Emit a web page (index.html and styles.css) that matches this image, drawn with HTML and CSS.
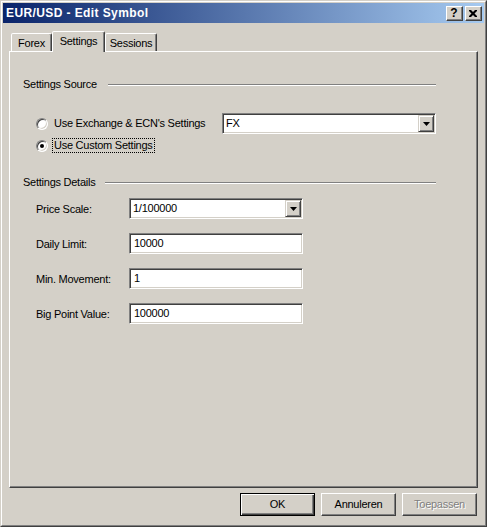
FILE: index.html
```html
<!DOCTYPE html>
<html>
<head>
<meta charset="utf-8">
<title>EUR/USD - Edit Symbol</title>
<link rel="stylesheet" href="styles.css">
</head>
<body>
<div class="window">
  <div class="frame">
    <div class="titlebar">
      <span class="title">EUR/USD - Edit Symbol</span>
      <div class="caption-buttons">
        <span class="cbtn help">?</span>
        <span class="cbtn close">
          <svg width="8" height="7" viewBox="0 0 8 7"><path d="M0 0h2l2 2 2-2h2v1L5.5 3.5 8 6v1H6L4 5 2 7H0V6l2.5-2.5L0 1z" fill="#000"/></svg>
        </span>
      </div>
    </div>
    <div class="client">
      <div class="tabs">
        <div class="tab tab-forex">Forex</div>
        <div class="tab tab-settings active">Settings</div>
        <div class="tab tab-sessions">Sessions</div>
      </div>
      <div class="panel">
        <div class="group-title"><span class="gt-text gt-source">Settings Source</span><span class="etch"></span></div>
        <div class="options">
          <div class="radio-row row-exchange">
            <span class="radio"></span>
            <span class="radio-label label-exchange">Use Exchange &amp; ECN's Settings</span>
            <div class="combo combo-source">
              <span class="combo-value">FX</span>
              <span class="drop"><svg width="7" height="4" viewBox="0 0 7 4"><polygon points="0,0 7,0 3.5,4" fill="#000"/></svg></span>
            </div>
          </div>
          <div class="radio-row row-custom">
            <span class="radio checked"></span>
            <span class="radio-label focus">Use Custom Settings</span>
          </div>
        </div>
        <div class="group-title second"><span class="gt-text gt-details">Settings Details</span><span class="etch"></span></div>
        <div class="fields">
          <div class="field-row">
            <span class="field-label">Price Scale:</span>
            <div class="combo combo-field">
              <span class="combo-value">1/100000</span>
              <span class="drop"><svg width="7" height="4" viewBox="0 0 7 4"><polygon points="0,0 7,0 3.5,4" fill="#000"/></svg></span>
            </div>
          </div>
          <div class="field-row">
            <span class="field-label">Daily Limit:</span>
            <div class="input">10000</div>
          </div>
          <div class="field-row">
            <span class="field-label">Min. Movement:</span>
            <div class="input">1</div>
          </div>
          <div class="field-row">
            <span class="field-label">Big Point Value:</span>
            <div class="input">100000</div>
          </div>
        </div>
      </div>
      <div class="buttons">
        <div class="btn default">OK</div>
        <div class="btn">Annuleren</div>
        <div class="btn disabled">Toepassen</div>
      </div>
    </div>
  </div>
</div>
</body>
</html>
```
FILE: styles.css
```css
* { box-sizing: border-box; }
html, body { margin: 0; padding: 0; }
body {
  font-family: "Liberation Sans", Arial, sans-serif;
  font-size: 11px;
  letter-spacing: -0.25px;
  color: #000;
  background: #d4d0c8;
}
.window {
  width: 487px;
  height: 527px;
  border: 1px solid;
  border-color: #d4d0c8 #404040 #404040 #d4d0c8;
  background: #d4d0c8;
}
.frame {
  height: 100%;
  border: 1px solid;
  border-color: #fff #808080 #808080 #fff;
  padding: 1px;
  display: flex;
  flex-direction: column;
}
.titlebar {
  height: 20px;
  flex: none;
  background: linear-gradient(to right, #0a246a, #a6caf0);
  display: flex;
  align-items: center;
  justify-content: space-between;
  padding: 0 2px 0 2px;
}
.title {
  color: #fff;
  font-weight: bold;
  font-size: 12px;
  padding-left: 1px;
  letter-spacing: 0.4px;
}
.caption-buttons { display: flex; gap: 2px; }
.cbtn {
  width: 17px;
  height: 15px;
  background: #d4d0c8;
  border: 1px solid;
  border-color: #fff #404040 #404040 #fff;
  box-shadow: inset -1px -1px #808080;
  display: flex;
  align-items: center;
  justify-content: center;
  font-weight: bold;
  font-size: 12px;
  line-height: 12px;
  letter-spacing: 0;
  padding-right: 1px;
}
.client {
  flex: 1;
  padding: 8px 6px 8px 6px;
  display: flex;
  flex-direction: column;
}
.tabs {
  display: flex;
  align-items: flex-end;
  height: 20px;
  padding-left: 2px;
  flex: none;
}
.tab {
  height: 18px;
  border: 1px solid;
  border-bottom: none;
  border-color: #fff #404040 transparent #fff;
  box-shadow: inset -1px 0 #808080;
  border-radius: 2px 2px 0 0;
  text-align: center;
  line-height: 16px;
  padding-top: 1px;
  background: #d4d0c8;
}
.tab-forex { width: 41px; }
.tab-settings { width: 53px; }
.tab-sessions { width: 52px; }
.tab.active {
  height: 21px;
  margin-bottom: -1px;
  position: relative;
  z-index: 1;
}
.panel {
  height: 437px;
  flex: none;
  border: 1px solid;
  border-color: #fff #404040 #404040 #fff;
  box-shadow: inset -1px -1px #808080;
  padding: 26px 41px 0 13px;
}
.group-title {
  display: flex;
  align-items: center;
  height: 13px;
  line-height: 13px;
}
.group-title.second { margin-top: 22px; }
.gt-text { flex: none; white-space: nowrap; }
.gt-source { width: 85px; }
.gt-details { width: 82px; }
.etch {
  flex: 1;
  height: 2px;
  border-top: 1px solid #808080;
  border-bottom: 1px solid #fff;
}
.options { padding-left: 13px; }
.radio-row {
  display: flex;
  align-items: center;
}
.row-exchange { margin-top: 22px; height: 21px; }
.row-custom { margin-top: 3px; height: 17px; }
.radio {
  width: 12px;
  height: 12px;
  flex: none;
  border-radius: 50%;
  background: #fff;
  border: 1px solid;
  border-color: #808080 #fff #fff #808080;
  box-shadow: inset 1px 1px #404040, inset -1px -1px #d4d0c8;
  margin-right: 4px;
  display: flex;
  align-items: center;
  justify-content: center;
}
.radio.checked::after {
  content: "";
  width: 4px;
  height: 4px;
  border-radius: 50%;
  background: #000;
}
.radio-label {
  border: 1px solid transparent;
  padding: 0 1px;
  line-height: 13px;
  white-space: nowrap;
}
.radio-label.focus { border: 1px dotted #000; }
.label-exchange { width: 170px; }
.combo {
  display: flex;
  align-items: stretch;
  height: 21px;
  background: #fff;
  border: 1px solid;
  border-color: #808080 #fff #fff #808080;
  box-shadow: inset 1px 1px #404040, inset -1px -1px #d4d0c8;
  padding: 1px;
}
.combo-source { width: 214px; }
.combo-field { width: 174px; }
.combo-value {
  flex: 1;
  padding-left: 2px;
  line-height: 17px;
}
.drop {
  width: 16px;
  flex: none;
  background: #d4d0c8;
  border: 1px solid;
  border-color: #d4d0c8 #404040 #404040 #d4d0c8;
  box-shadow: inset 1px 1px #fff, inset -1px -1px #808080;
  display: flex;
  align-items: center;
  justify-content: center;
}
.fields {
  padding-left: 13px;
  margin-top: 9px;
  display: flex;
  flex-direction: column;
  gap: 14px;
}
.field-row {
  display: flex;
  align-items: center;
  height: 21px;
}
.field-label { width: 93px; flex: none; }
.input {
  width: 174px;
  height: 21px;
  background: #fff;
  border: 1px solid;
  border-color: #808080 #fff #fff #808080;
  box-shadow: inset 1px 1px #404040, inset -1px -1px #d4d0c8;
  padding-left: 4px;
  line-height: 19px;
}
.buttons {
  display: flex;
  justify-content: flex-end;
  gap: 6px;
  margin-top: 5px;
  padding-right: 1px;
  flex: none;
}
.btn {
  width: 75px;
  height: 23px;
  border: 1px solid;
  border-color: #fff #404040 #404040 #fff;
  box-shadow: inset -1px -1px #808080;
  text-align: center;
  line-height: 21px;
}
.btn.default {
  border-color: #000;
  box-shadow: inset 1px 1px #fff, inset -1px -1px #404040, inset -2px -2px #808080;
}
.btn.disabled {
  color: #808080;
  text-shadow: 1px 1px #fff;
}
```
